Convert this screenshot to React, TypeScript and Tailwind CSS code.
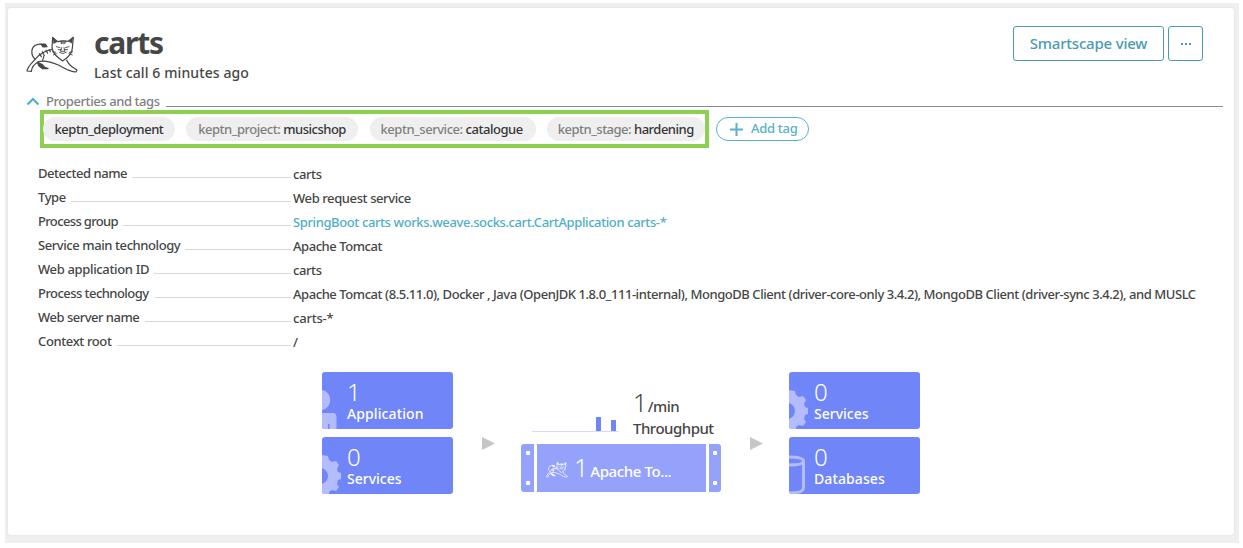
import React from "react";

function Cat({ className, stroke }: { className: string; stroke: number }) {
  return (
    <svg viewBox="33 34 156 114" className={className} fill="none" stroke="currentColor" strokeWidth={stroke} strokeLinejoin="round" strokeLinecap="round">
      <path d="M113 38 L111 68 C112 88 130 100 143 109 C157 100 172 88 172 70 L175 38 L160 50 Q143 47 128 51 Z" />
      <path d="M111 74 C92 78 74 88 63 101 C52 114 38 124 36 139 L49 140 C50 126 58 118 70 111 C92 105 112 113 130 121 C146 129 162 141 183 142 L186 136 C177 130 163 126 155 106" />
      <path d="M60 103 C47 92 46 66 66 60 C74 57 80 59 84 61" />
      <path d="M78 58 L91 58 L96 66 L84 67 Z" fill="currentColor" />
      <path d="M67 113 L82 120 L88 127 L99 132 L83 132 L72 124 Z" fill="currentColor" />
      <path d="M113 39 L116 57 L127 51 Z M174 39 L161 50 L170 56 Z" fill="currentColor" strokeWidth={1} />
      <path d="M138 49 L139 56 M144 49 V57 M151 49 L149 56" />
      <path d="M124 66 L135 69 M162 66 L151 69 M130 75 H139 M147 75 H158 M140 69 L136 80 H150 L147 69 M134 84 Q144 90 154 83" strokeWidth={2.6} />
      <path d="M113 81 L122 83 M115 91 L124 87 M173 81 L163 83 M172 91 L162 87" strokeWidth={2.6} />
      <path d="M73 87 L79 96 M82 81 L88 93 M93 77 L98 86 M103 75 L106 81 M86 96 L83 107" />
    </svg>
  );
}

function Gear({ className }: { className: string }) {
  return (
    <svg viewBox="0 0 20 40" className={className}>
      <path
        d="M0 1 L6 2 L7 6 L10 8 L14 7 L17 11 L15 15 L16 18 L19 19 V25 L16 26 L15 30 L17 33 L14 37 L10 36 L7 38 V40 H0 V30 C8 27 8 17 0 14 Z"
        fill="#b3bcff"
      />
    </svg>
  );
}

const tags = [
  { name: "keptn_deployment", value: "", box: "w-[132px] pl-[11.5px] tracking-[-0.45px]" },
  { name: "keptn_project:", value: "musicshop", box: "w-[172px] pl-[12px] tracking-[-0.48px]" },
  { name: "keptn_service:", value: "catalogue", box: "w-[166px] pl-[11px] tracking-[-0.46px]" },
  { name: "keptn_stage:", value: "hardening", box: "w-[158px] pl-[11px] tracking-[-0.5px]" },
];

const rows = [
  { label: "Detected name", value: "carts", l: "w-[89px] tracking-[-0.46px]", v: "tracking-[-0.4px]" },
  { label: "Type", value: "Web request service", l: "w-[28px] tracking-[-0.4px]", v: "tracking-[-0.4px]" },
  {
    label: "Process group",
    value: "SpringBoot carts works.weave.socks.cart.CartApplication carts-*",
    l: "w-[80px] tracking-[-0.65px]",
    v: "tracking-[-0.39px] text-[#4fafc6]",
  },
  { label: "Service main technology", value: "Apache Tomcat", l: "w-[142px] tracking-[-0.42px]", v: "tracking-[-0.45px]" },
  { label: "Web application ID", value: "carts", l: "w-[111px] tracking-[-0.35px]", v: "tracking-[-0.4px]" },
  {
    label: "Process technology",
    value:
      "Apache Tomcat (8.5.11.0), Docker , Java (OpenJDK 1.8.0_111-internal), MongoDB Client (driver-core-only 3.4.2), MongoDB Client (driver-sync 3.4.2), and MUSLC",
    l: "w-[112px] tracking-[-0.55px]",
    v: "tracking-[-0.44px]",
  },
  { label: "Web server name", value: "carts-*", l: "w-[102px] tracking-[-0.5px]", v: "tracking-[-0.2px]" },
  { label: "Context root", value: "/", l: "w-[74px] tracking-[-0.38px]", v: "" },
];

function Tile({ count, label, track, children }: { count: string; label: string; track: string; children: React.ReactNode }) {
  return (
    <div className="relative h-[57px] w-[131px] overflow-hidden rounded-[3px] bg-[#7085f8] pl-[25px] text-white">
      {children}
      <div className="relative h-[32px] pt-[5px] text-[24px] leading-[29px] font-[350]">{count}</div>
      <div className={`relative text-[14px] leading-[20px] font-medium ${track}`}>{label}</div>
    </div>
  );
}

function Side({ className }: { className: string }) {
  return (
    <div className={`flex h-[48px] flex-col items-center justify-between bg-[#94a2fb] py-[7px] ${className}`}>
      <i className="size-[4px] rounded-[1px] bg-white" />
      <i className="size-[4px] rounded-[1px] bg-white" />
    </div>
  );
}

function Arrow() {
  return (
    <svg viewBox="0 0 13 13" className="size-[13px]">
      <path d="M0 0 L13 6.5 L0 13 Z" fill="#c6c6c6" />
    </svg>
  );
}

export default function App() {
  return (
    <div className="h-[548px] w-[1243px] overflow-hidden bg-white pt-[3px] pl-[5px] font-['Noto_Sans',sans-serif] font-medium whitespace-nowrap text-[#454646]">
      <div className="h-[540px] w-[1234px] bg-[#efefef] pt-[5px] pl-[3px]">
        <main className="h-[527px] w-[1226px] rounded-[3px] bg-white shadow-[0_0_1px_1px_#e8e8e8]">
          <header className="flex h-[84px]">
            <Cat className="mt-[28px] ml-[18px] h-[38px] w-[52px] text-[#454646]" stroke={3.6} />
            <div className="ml-[16px] pt-[14px]">
              <h1 className="h-[40px] text-[30px] leading-[42px] font-bold tracking-[-1.2px]">carts</h1>
              <p className="text-[14px] leading-[21px] tracking-[0.1px]">Last call 6 minutes ago</p>
            </div>
            <div className="mt-[18px] mr-[31px] ml-auto flex gap-[4px] text-[#4a9bb0]">
              <button className="h-[35px] w-[151px] rounded-[3px] border border-[#4a9bb0] text-[15px] tracking-[-0.2px]">Smartscape view</button>
              <button className="flex h-[35px] w-[35px] items-center justify-center gap-[2px] rounded-[3px] border border-[#4a9bb0]">
                <i className="size-[2px] bg-[#4a9bb0]" />
                <i className="size-[2px] bg-[#4a9bb0]" />
                <i className="size-[2px] bg-[#4a9bb0]" />
              </button>
            </div>
          </header>

          <div className="flex h-[18px] pl-[18px]">
            <svg viewBox="0 0 14 9" className="mt-[5px] h-[9px] w-[14px]">
              <path d="M1.5 7.5 L7 2 L12.5 7.5" fill="none" stroke="#4fb0c6" strokeWidth="2.2" />
            </svg>
            <span className="ml-[6px] w-[120px] text-[13px] leading-[19px] tracking-[-0.42px] text-[#7f8080]">Properties and tags</span>
            <span className="mt-[13.5px] h-[1.5px] w-[1057px] bg-[#8a8a8a]" />
          </div>

          <div className="flex h-[38px] items-center pl-[32px]">
            <div className="flex h-[38px] w-[669px] items-center gap-[11.25px] border-4 border-[#8ccf52]">
              {tags.map((t) => (
                <span key={t.name} className={`h-[24px] shrink-0 rounded-full bg-[#efefef] text-[13px] leading-[24px] first:-ml-px ${t.box}`}>
                  <span className={t.value ? "text-[#808080]" : "text-[#353637]"}>{t.name}</span>
                  {t.value && <span className="text-[#353637]"> {t.value}</span>}
                </span>
              ))}
            </div>
            <button className="ml-[7px] flex h-[24px] w-[93px] items-center rounded-full border border-[#58b2ca] pl-[13px] text-[13px] tracking-[-0.3px] text-[#58b2ca]">
              <svg viewBox="0 0 13 13" className="mr-[8px] size-[13px]">
                <path d="M6.5 0 V13 M0 6.5 H13" stroke="currentColor" strokeWidth="2" />
              </svg>
              Add tag
            </button>
          </div>

          <dl className="mt-[13px] pl-[30px]">
            {rows.map((r) => (
              <div key={r.label} className="flex h-[24px] text-[13px]">
                <dt className="flex w-[255px] shrink-0 leading-[24px]">
                  <span className={r.l}>{r.label}</span>
                  <span className="mt-[16px] mr-[2px] ml-[5px] h-px grow bg-[#d9d9d9]" />
                </dt>
                <dd className={`leading-[26px] ${r.v}`}>{r.value}</dd>
              </div>
            ))}
          </dl>

          <section className="mt-[19px] flex pl-[314px]">
            <div className="flex flex-col gap-[8px]">
              <Tile count="1" label="Application" track="tracking-[0.1px]">
                <svg viewBox="0 0 16 40" className="absolute bottom-0 left-0 h-[40px] w-[16px]">
                  <path d="M0 1 C11 3 11 19 0 21 Z M0 24 H11 Q14.500 24 14.500 28 V40 H7.500 V35 H6 V40 H0 Z" fill="#b3bcff" />
                </svg>
              </Tile>
              <Tile count="0" label="Services" track="tracking-[0px]">
                <Gear className="absolute bottom-0 left-0 h-[40px] w-[20px]" />
              </Tile>
            </div>
            <div className="mt-[65px] ml-[29px]">
              <Arrow />
            </div>
            <div className="mt-px ml-[26px] w-[200px]">
              <div className="flex h-[71px]">
                <div className="ml-[11px] flex h-[59px] w-[87px] items-end gap-[10px] border-b border-[#d5daff] pl-[64px]">
                  <i className="h-[14px] w-[5px] bg-[#7085f8]" />
                  <i className="h-[11px] w-[5px] bg-[#7085f8]" />
                </div>
                <div className="ml-[14px] pt-[15px] text-[15px] tracking-[-0.5px]">
                  <div className="flex h-[30px] items-baseline gap-[1px]">
                    <span className="text-[25px] leading-[29px] font-[350]">1</span>
                    <span>/min</span>
                  </div>
                  <div className="leading-[20px]">Throughput</div>
                </div>
              </div>
              <div className="flex gap-[3px]">
                <Side className="w-[13px] rounded-l-[3px]" />
                <div className="flex h-[48px] w-[169px] items-baseline bg-[#94a2fb] pl-[9px] text-white">
                  <Cat className="h-[16px] w-[22px] translate-y-[1px]" stroke={5} />
                  <span className="ml-[6px] text-[25px] leading-[46px] font-[350]">1</span>
                  <span className="ml-[2px] text-[15px] tracking-[-0.4px]">Apache To...</span>
                </div>
                <Side className="w-[12px] rounded-r-[3px]" />
              </div>
            </div>
            <div className="mt-[65px] ml-[29px]">
              <Arrow />
            </div>
            <div className="ml-[26px] flex flex-col gap-[8px]">
              <Tile count="0" label="Services" track="tracking-[0px]">
                <Gear className="absolute bottom-0 left-0 h-[40px] w-[20px]" />
              </Tile>
              <Tile count="0" label="Databases" track="tracking-[0.1px]">
                <svg viewBox="0 0 18 40" className="absolute bottom-0 left-0 h-[40px] w-[18px]" fill="none" stroke="#b3bcff" strokeWidth="3">
                  <path d="M0 3 C8 3 14.500 4 14.500 7 C14.500 10 8 11 0 11 M14.500 7 V34 C14.500 37 11 39 0 39" />
                </svg>
              </Tile>
            </div>
          </section>
        </main>
      </div>
    </div>
  );
}
